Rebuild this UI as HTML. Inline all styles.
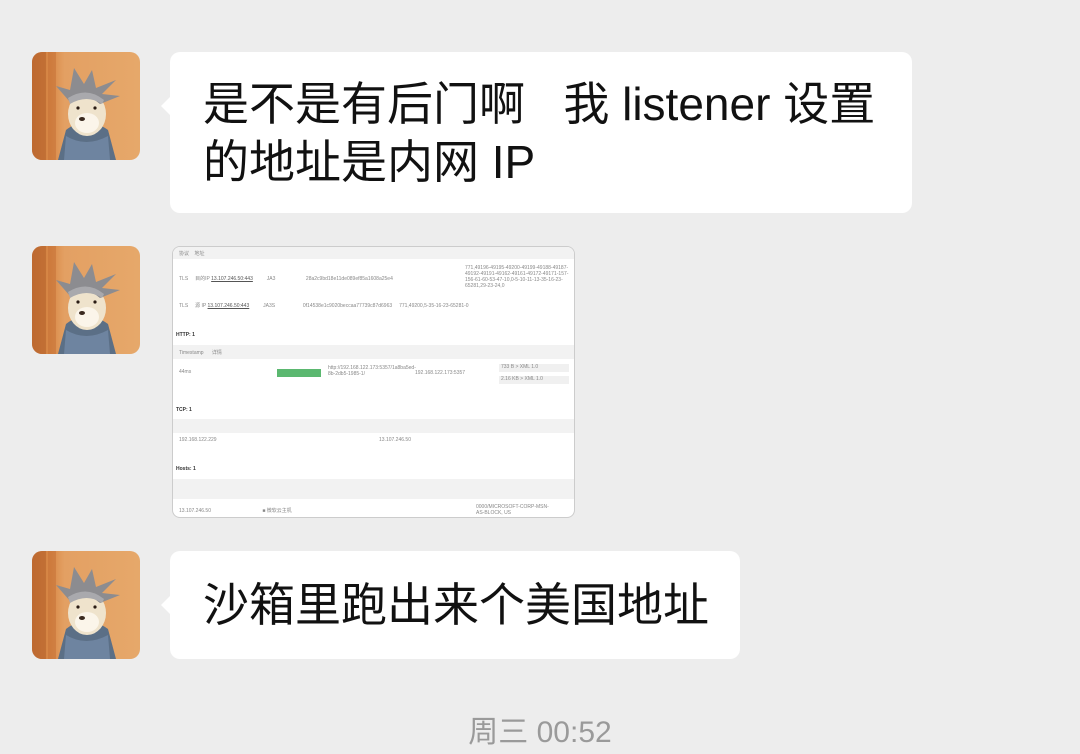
<!DOCTYPE html>
<html><head><meta charset="utf-8"><style>
*{margin:0;padding:0;box-sizing:border-box}
body{width:1080px;height:754px;background:#ededed;position:relative;overflow:hidden;font-family:"Liberation Sans","Noto Sans CJK SC",sans-serif}
.av{position:absolute;left:32px;width:108px;height:108px;border-radius:10px;overflow:hidden;background:linear-gradient(90deg,#c9753a 0%,#d98a48 18%,#e3a063 30%,#e6a86a 100%)}
.b{position:absolute;background:#fff;border-radius:10px;color:#111;font-size:46px;line-height:58px}
.b:before{content:"";position:absolute;left:-9px;top:44px;border:10px solid transparent;border-right-color:#fff;border-left:0}
.img{position:absolute;left:172px;top:246px;width:403px;height:272px;background:#fff;border:1px solid #ccc;border-radius:8px;overflow:hidden;font-size:5px;color:#888}
.img div{position:absolute}
.hd{background:#f2f2f2;left:0;right:0}
.time{position:absolute;left:0;width:1080px;text-align:center;top:707px;font-size:30px;color:#9a9a9a}
</style></head><body>
<svg width="0" height="0" style="position:absolute"><defs>
<g id="dog">
<rect x="0" y="0" width="14" height="108" fill="#b5622c" opacity=".6"/>
<rect x="16" y="0" width="8" height="108" fill="#c46e34" opacity=".5"/>
<path d="M26 108 L34 78 Q54 62 76 78 L84 108Z" fill="#5b6f86"/>
<path d="M34 84 Q54 96 76 84 L78 108 L32 108Z" fill="#6e84a0"/>
<ellipse cx="55" cy="62" rx="19" ry="22" fill="#efe3cc"/>
<ellipse cx="55" cy="71" rx="12" ry="10" fill="#fbf5ea"/>
<ellipse cx="50" cy="67" rx="3" ry="2" fill="#3a2a20"/>
<circle cx="46" cy="56" r="1.6" fill="#2a1c14"/><circle cx="63" cy="56" r="1.6" fill="#2a1c14"/>
<path d="M24 34 L38 38 L42 16 L52 32 L60 18 L64 36 L84 28 L70 42 L88 44 L68 52 Q55 40 38 50 L24 34Z" fill="#8c8c90"/>
<path d="M36 46 Q55 34 72 48 L70 52 Q55 42 38 52Z" fill="#a9a9ad"/>
</g></defs></svg>
<div class="av" style="top:52px"><svg width="108" height="108"><use href="#dog"/></svg></div>
<div class="av" style="top:246px"><svg width="108" height="108"><use href="#dog"/></svg></div>
<div class="av" style="top:551px"><svg width="108" height="108"><use href="#dog"/></svg></div>

<div class="b" style="left:170px;top:52px;width:742px;height:161px;padding:23px 0 0 33px">是不是有后门啊&nbsp;&nbsp; 我 listener 设置<br>的地址是内网 IP</div>

<div class="img">
<div class="hd" style="top:0;height:12px"></div>
<div style="top:3px;left:6px">协议 &nbsp;&nbsp; 地址</div>
<div style="top:28px;left:6px">TLS &nbsp;&nbsp;&nbsp; 目的IP <u style="color:#555">13.107.246.50:443</u> &nbsp;&nbsp;&nbsp;&nbsp;&nbsp;&nbsp;&nbsp;&nbsp; JA3 &nbsp;&nbsp;&nbsp;&nbsp;&nbsp;&nbsp;&nbsp;&nbsp;&nbsp;&nbsp;&nbsp;&nbsp;&nbsp;&nbsp;&nbsp;&nbsp;&nbsp;&nbsp;&nbsp;&nbsp; 28a2c9bd18e11de089ef85a1608a25e4</div>
<div style="top:18px;left:292px;width:108px;line-height:6px">771,49196-49195-49200-49199-49188-49187-49192-49191-49162-49161-49172-49171-157-156-61-60-53-47-10,0-5-10-11-13-35-16-23-65281,29-23-24,0</div>
<div style="top:55px;left:6px">TLS &nbsp;&nbsp;&nbsp; 源 IP <u style="color:#555">13.107.246.50:443</u> &nbsp;&nbsp;&nbsp;&nbsp;&nbsp;&nbsp;&nbsp;&nbsp; JA3S &nbsp;&nbsp;&nbsp;&nbsp;&nbsp;&nbsp;&nbsp;&nbsp;&nbsp;&nbsp;&nbsp;&nbsp;&nbsp;&nbsp;&nbsp;&nbsp;&nbsp;&nbsp; 0f14538e1c9020beccaa77739c87d6963 &nbsp;&nbsp;&nbsp; 771,49200,5-35-16-23-65281-0</div>
<div style="top:85px;left:3px;color:#333;font-weight:bold">HTTP: 1</div>
<div class="hd" style="top:98px;height:14px"></div>
<div style="top:102px;left:6px">Timestamp &nbsp;&nbsp;&nbsp;&nbsp; 详情</div>
<div style="top:118px;left:155px;line-height:6px;width:70px">http://192.168.122.173:5357/1a8ba5ed-8b-2db5-1985-1/</div>
<div style="top:122px;left:6px">44ms</div>
<div style="top:122px;left:104px;width:44px;height:8px;background:#5bb870"></div>
<div style="top:123px;left:242px">192.168.122.173:5357</div>
<div style="top:117px;left:326px;width:70px;height:8px;background:#f0f0f0;padding-left:2px">733 B &gt; XML 1.0</div>
<div style="top:129px;left:326px;width:70px;height:8px;background:#f0f0f0;padding-left:2px">2.16 KB &gt; XML 1.0</div>
<div style="top:160px;left:3px;color:#333;font-weight:bold">TCP: 1</div>
<div class="hd" style="top:172px;height:14px"></div>
<div style="top:190px;left:6px">192.168.122.229</div>
<div style="top:190px;left:206px">13.107.246.50</div>
<div style="top:219px;left:3px;color:#333;font-weight:bold">Hosts: 1</div>
<div class="hd" style="top:232px;height:20px"></div>
<div style="top:260px;left:6px">13.107.246.50 &nbsp;&nbsp;&nbsp;&nbsp;&nbsp;&nbsp;&nbsp;&nbsp;&nbsp;&nbsp;&nbsp;&nbsp;&nbsp;&nbsp;&nbsp;&nbsp;&nbsp;&nbsp;&nbsp;&nbsp;&nbsp;&nbsp;&nbsp;&nbsp;&nbsp;&nbsp;&nbsp;&nbsp;&nbsp;&nbsp;&nbsp;&nbsp;&nbsp;&nbsp;&nbsp; ■ 微软云主机</div>
<div style="top:257px;left:303px;line-height:6px;width:75px">0000/MICROSOFT-CORP-MSN-AS-BLOCK, US</div>
</div>

<div class="b" style="left:170px;top:551px;width:570px;height:108px;padding:25px 0 0 33px">沙箱里跑出来个美国地址</div>
<div class="time">周三 00:52</div>
</body></html>
